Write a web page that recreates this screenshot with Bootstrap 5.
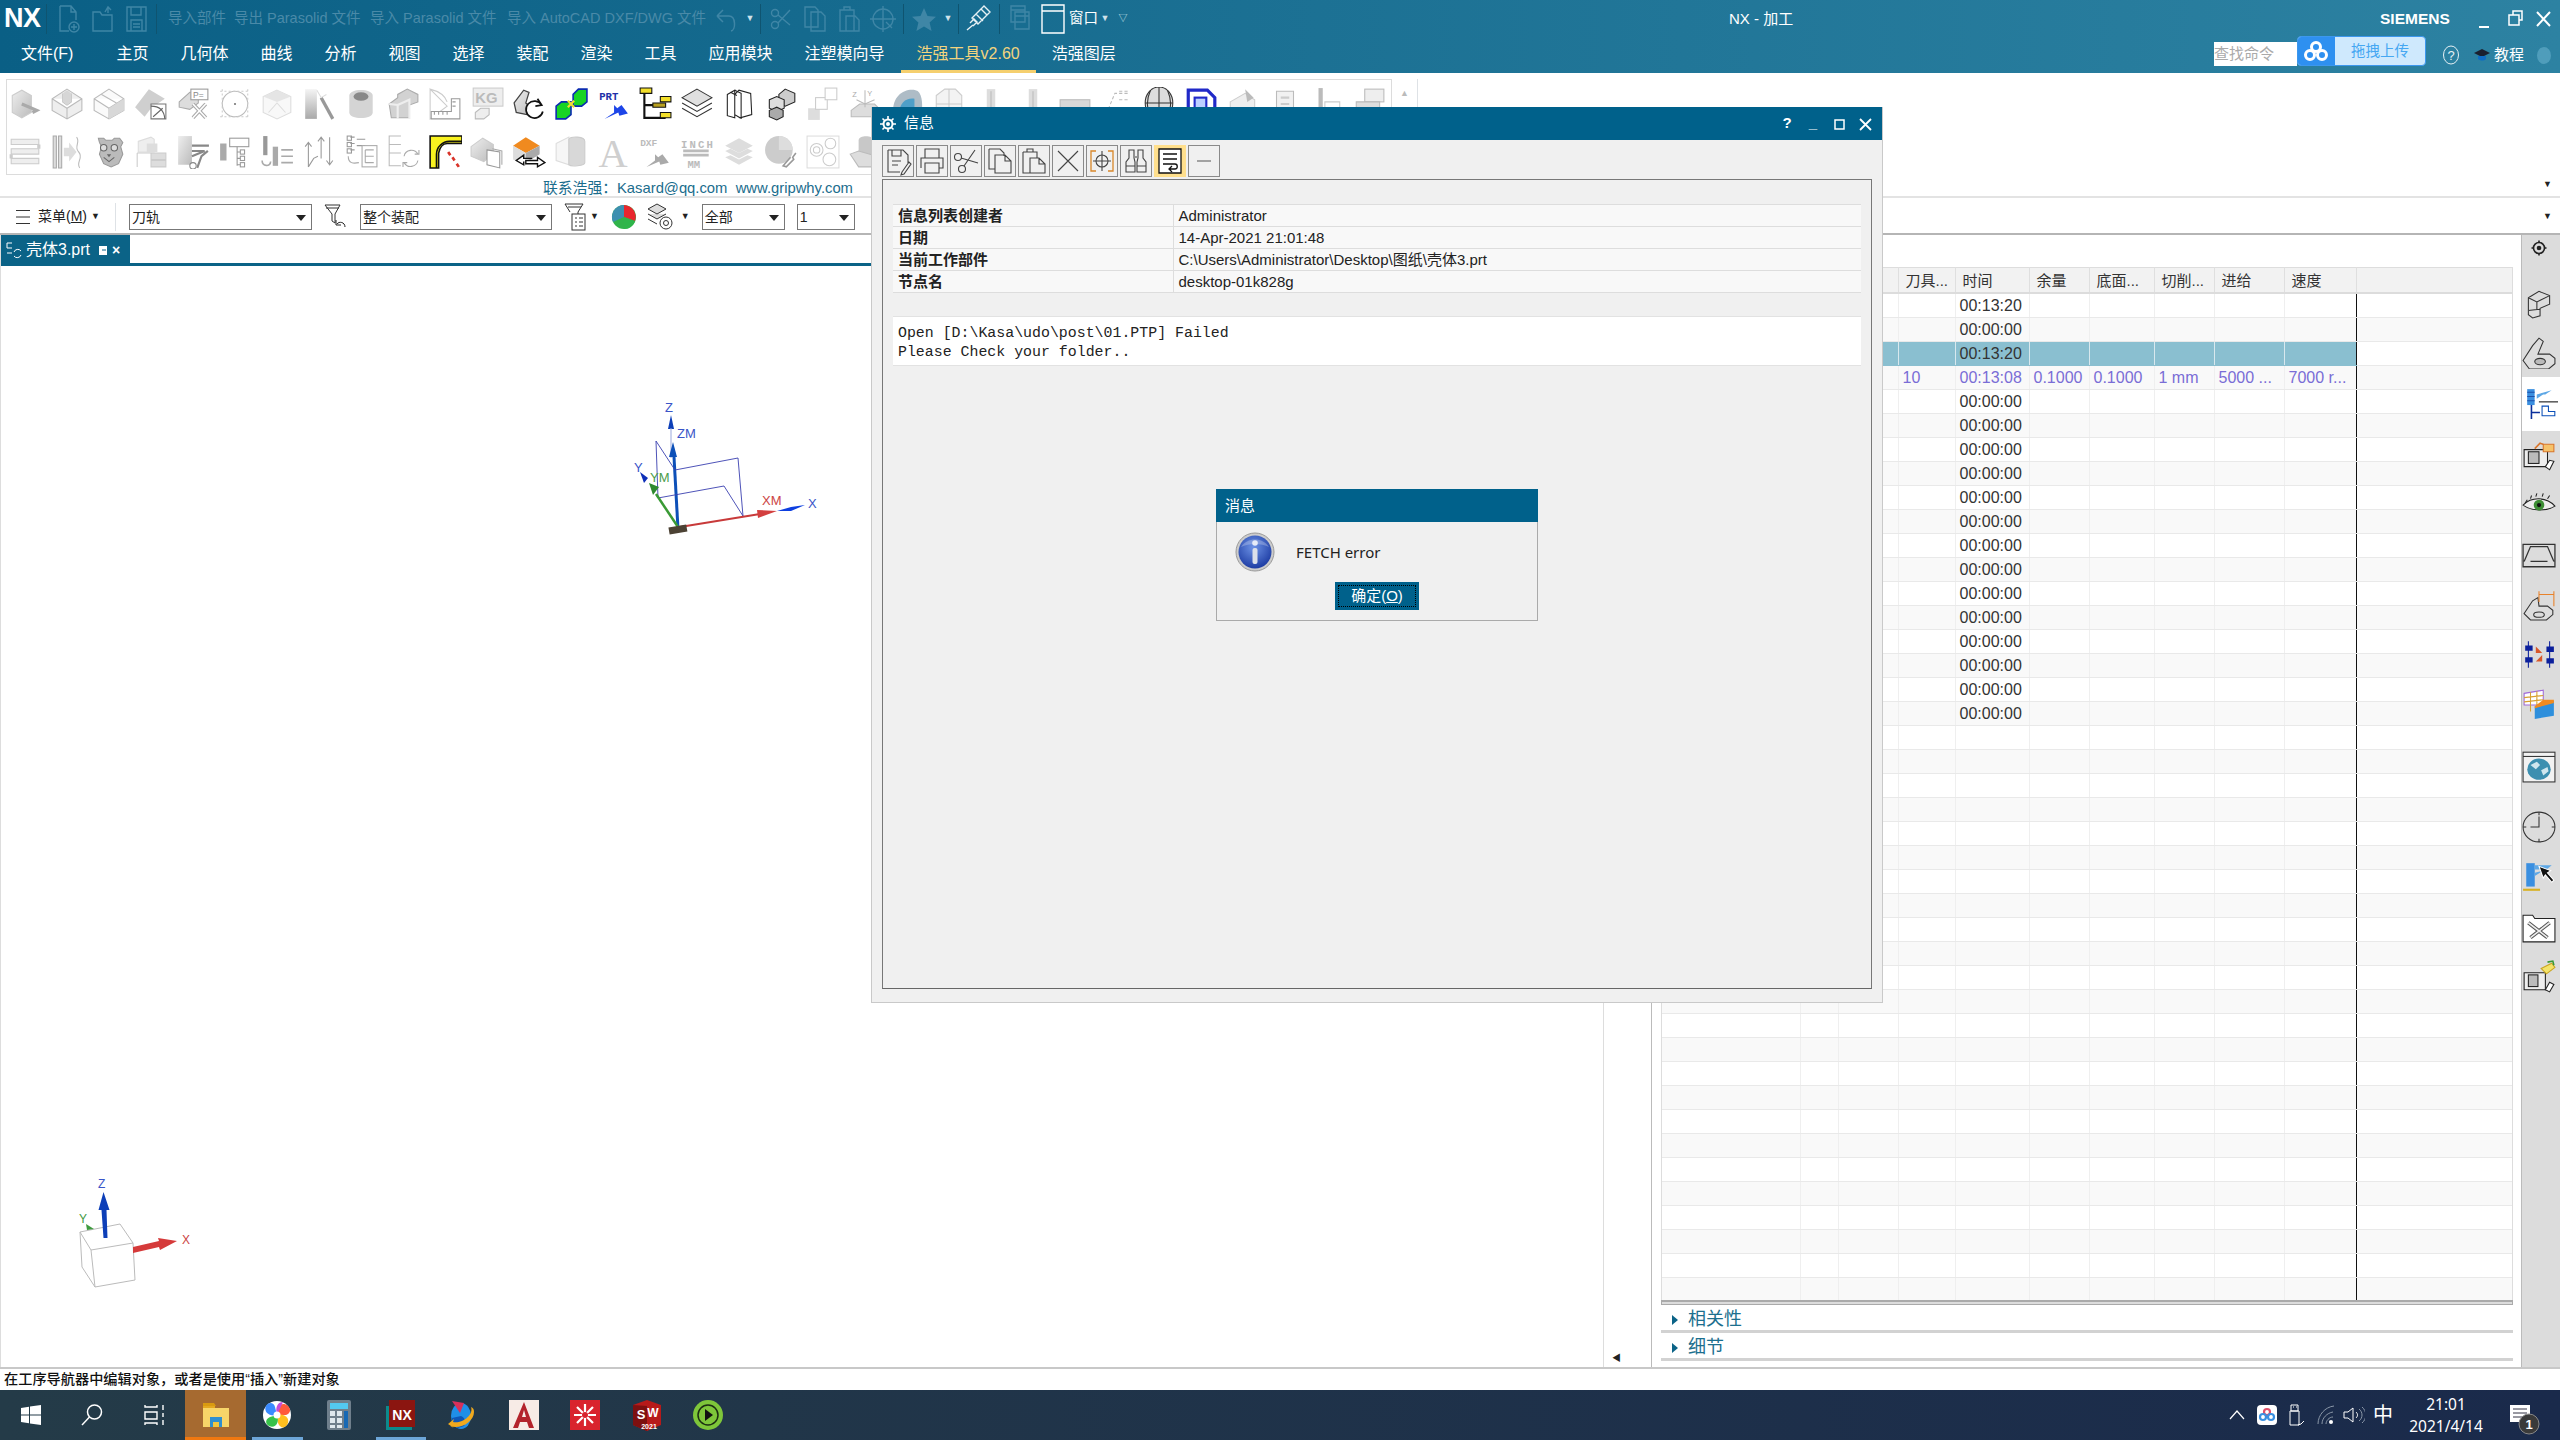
<!DOCTYPE html>
<html lang="zh-CN">

<head>
    <meta charset="UTF-8">
    <title>NX - 加工</title>
    <link href="https://cdn.jsdelivr.net/npm/bootstrap@5.3.3/dist/css/bootstrap.min.css" rel="stylesheet">
    <style>
        body {
            width: 2560px;
            height: 1440px;
            overflow: hidden;
            position: relative;
            background: #fff;
            font-family: "Liberation Sans", "Noto Sans CJK SC", sans-serif;
            font-size: 15px;
            color: #222;
        }

        .nx-head {
            height: 73px;
            background: linear-gradient(90deg, #0a5f85, #2d82a2);
            color: #fff;
        }

        .nx-qat {
            height: 37px;
        }

        .nx-logo {
            width: 46px;
            padding-left: 4px;
            font: bold 27px/37px "Liberation Sans", sans-serif;
            letter-spacing: -.5px;
        }

        .nx-sep {
            width: 1px;
            height: 30px;
            margin: 0 3px;
            background: #0f5470;
        }

        .nx-qi {
            width: 34px;
            height: 30px;
            flex: none;
        }

        .nx-qtx {
            flex: none;
            color: #4a8aa8;
            font-size: 14.5px;
            white-space: nowrap;
            margin-right: 10px;
        }

        .nx-caret {
            width: 14px;
            text-align: center;
            font-size: 9px;
            color: #cfe2ea;
            flex: none;
        }

        .nx-title {
            left: 1729px;
            top: 8px;
            font-size: 15px;
        }

        .nx-brand {
            font: bold 15.5px "Liberation Sans", sans-serif;
            width: 69px;
            margin-right: 25px;
        }

        .nx-tabs {
            height: 36px;
            padding-left: 5px;
        }

        .nx-tab {
            padding: 0 16px;
            line-height: 34px;
            font-size: 16px;
            white-space: nowrap;
        }

        .nx-tab-on {
            color: #f3d47e;
            border-bottom: 3px solid #f5cf6e;
        }

        .nx-search {
            width: 83px;
            height: 24px;
            background: #fff;
            color: #aaa;
            font-size: 15px;
            line-height: 24px;
            margin-top: 5px;
        }

        .nx-cloud {
            width: 129px;
            height: 30px;
            border: 1px solid #3c97ee;
            border-radius: 4px;
            background: #cfe9fd;
            color: #45a7f2;
            font-size: 14.5px;
            line-height: 28px;
            margin-top: -1px;
            margin-right: 17px;
            overflow: hidden;
        }

        .nx-cloud-ico {
            width: 37px;
            height: 100%;
            background: #2e90f0;
            margin-right: 16px;
        }

        .nx-help {
            height: 36px;
            margin-right: 9px;
        }

        .nx-ribbon {
            height: 125px;
            border-bottom: 2px solid #e3e3e3;
            padding: 6px 0 0 6px;
        }

        .nx-rbox {
            width: 1386px;
            height: 96px;
            border: 1px solid #dcdcdc;
            overflow: hidden;
        }

        .nx-rrow {
            height: 47px;
            margin-left: -3px;
        }

        #ribbonB {
            margin-top: 1px;
        }

        .nx-rcell {
            width: 42px;
            flex: none;
        }

        .nx-rcell svg {
            width: 34px;
            height: 34px;
        }

        .nx-rmore {
            color: #bbb;
            font-size: 9px;
        }

        .nx-contact {
            left: 543px;
            top: 104px;
            color: #1b6d8d;
            font-size: 14.8px;
            white-space: nowrap;
        }

        .nx-tools {
            height: 37px;
            border-bottom: 2px solid #b5b5b5;
            font-size: 14px;
            padding-top: 2px;
        }

        .nx-drop {
            height: 26px;
            border: 1px solid #777;
            background: #fff;
            line-height: 24px;
            padding-left: 2px;
            position: relative;
            flex: none;
        }

        .nx-drop::after {
            content: "";
            position: absolute;
            right: 5px;
            top: 10px;
            border: 5px solid transparent;
            border-top: 6px solid #222;
            border-bottom: 0;
        }

        .nx-filter {
            margin: 0 13px 0 11px;
            flex: none;
        }

        .nx-main {
            height: 1132px;
        }

        .nx-gfx {
            width: 1604px;
            border-right: 1px solid #ddd;
            border-left: 1px solid #ddd;
        }

        .nx-ftab {
            width: 129px;
            height: 28px;
            background: #0b6387;
            color: #fff;
            font-size: 16px;
            line-height: 28px;
            padding: 1px 0 0 5px;
            white-space: nowrap;
        }

        .nx-fline {
            height: 3px;
            background: #0b6387;
        }

        .nx-canvas {
            flex: 1;
            position: relative;
        }

        .nx-triad {
            position: absolute;
        }

        .nx-gut {
            width: 48px;
            border-right: 1px solid #bbb;
        }

        .nx-panel {
            width: 869px;
            padding: 32px 8px 0 9px;
        }

        .nx-gridwrap {
            height: 1033px;
            overflow: hidden;
            border-left: 1px solid #ddd;
            border-right: 1px solid #ddd;
        }

        .nx-grid {
            table-layout: fixed;
            width: 851px;
            margin: 0;
            font-size: 16px;
        }

        .nx-grid th,
        .nx-grid td {
            height: 24px;
            padding: 0 4px;
            line-height: 23px;
            border: 0;
            border-right: 1px solid #efefef;
            border-bottom: 1px solid #e9e9e9;
            white-space: nowrap;
            overflow: hidden;
            box-shadow: none;
            background: transparent;
            color: #333;
        }

        .nx-grid th {
            height: 25px;
            font-weight: 400;
            font-size: 15px;
            padding-left: 7px;
            background: #f2f2f2;
            border-top: 1px solid #ddd;
            border-bottom: 2px solid #dcdcdc;
            border-right: 1px solid #dfdfdf;
        }

        .nx-grid tr:nth-child(even) td {
            background: #f9f9f9;
        }

        .nx-grid td.nx-last {
            border-right: 1px solid #111;
        }

        .nx-grid tr.nx-sel td:not(.nx-end) {
            background: #8abfd0;
            border-right-color: #d8e8ee;
            border-bottom-color: #8abfd0;
        }

        .nx-grid tr.nx-sel td.nx-last {
            border-right-color: #111;
        }

        .nx-grid tr.nx-op td {
            color: #7a6dd6;
        }

        .nx-hbar {
            height: 5px;
            background: #dcdcdc;
            border: 1px solid #aaa;
            border-top-width: 2px;
        }

        .nx-sec {
            height: 28px;
            border-bottom: 3px solid #d2d2d2;
            color: #1c6f8e;
            font-size: 18px;
            line-height: 28px;
            padding-left: 11px;
        }

        .nx-tri {
            display: inline-block;
            border: 5px solid transparent;
            border-left: 6px solid #0b6387;
            border-right: 0;
            margin-right: 10px;
        }

        .nx-side {
            width: 39px;
            background: #dcdcdc;
            border-left: 1px solid #bbb;
        }

        .nx-si {
            width: 36px;
            height: 50px;
            flex: none;
        }

        .nx-si svg {
            width: 34px;
            height: 34px;
        }

        .nx-si-on {
            background: #fff;
            height: 54px;
            width: 38px;
            align-self: flex-start;
        }

        .nx-status {
            height: 23px;
            border-top: 2px solid #c8c8c8;
            font-size: 14.2px;
            line-height: 21px;
            padding-left: 4px;
            color: #111;
            font-weight: 500;
        }

        .nx-bar {
            height: 50px;
            background: linear-gradient(90deg, #243b48, #1a2a4b);
        }

        .nx-bi {
            width: 61.6px;
            height: 50px;
            flex: none;
            position: relative;
        }

        .nx-bi-file {
            background: #a66a30;
            border-bottom: 3px solid #f07810;
        }

        .nx-bi-run::after {
            content: "";
            position: absolute;
            left: 6px;
            right: 5px;
            bottom: 0;
            height: 3px;
            background: #6da6d8;
        }

        .nx-tray {
            color: #fff;
            margin-right: 17px;
        }

        .nx-tgap {
            margin-left: 12px;
        }

        .nx-clock {
            width: 90px;
            font-size: 15.5px;
            line-height: 22px;
            text-align: center;
            font-family: "Noto Sans", sans-serif;
        }

        .nx-win {
            position: absolute;
            left: 871px;
            top: 107px;
            width: 1012px;
            height: 896px;
            background: #f0f0f0;
            border: 1px solid #c9c9c9;
            border-top: 0;
        }

        .nx-wbar {
            height: 33px;
            background: #00618b;
            color: #fff;
            padding-left: 8px;
        }

        .nx-wctl {
            font-size: 15px;
            font-weight: 700;
            width: 26px;
            text-align: center;
        }

        .nx-wtools {
            height: 39px;
            padding: 5px 0 0 10px;
            gap: 2px;
        }

        .nx-wbtn {
            width: 32px;
            height: 32px;
            border: 1px solid #8a8a8a;
        }

        .nx-wbtn-on {
            background: #ffdf8c;
            border-color: #ffdf8c;
        }

        .nx-wbody {
            height: 810px;
            margin: 0 10px;
            border: 1px solid #777;
            border-bottom-color: #666;
            padding: 24px 10px 0;
        }

        .nx-info {
            table-layout: fixed;
            margin: 0;
            font-size: 15px;
            border-top: 1px solid #ddd;
        }

        .nx-info td {
            height: 22px;
            padding: 0 5px;
            line-height: 21px;
            border: 0;
            border-bottom: 1px solid #ddd;
            background: #f8f8f8;
            box-shadow: none;
            color: #222;
            white-space: nowrap;
        }

        .nx-info td:first-child {
            width: 280px;
            font-weight: 700;
            border-right: 1px solid #ddd;
        }

        .nx-log {
            margin-top: 23px;
            height: 50px;
            background: #fff;
            border-top: 1px solid #e2e2e2;
            border-bottom: 1px solid #e2e2e2;
            padding: 7px 5px;
            font: 14.9px/19px "Liberation Mono", monospace;
            color: #222;
        }

        .nx-msg {
            position: absolute;
            left: 344px;
            top: 382px;
            width: 322px;
            height: 132px;
            background: #f0f0f0;
            border: 1px solid #aaa;
            border-top: 0;
        }

        .nx-mbar {
            height: 33px;
            margin: 0 -1px;
            background: #00618b;
            color: #fff;
            font-size: 15px;
            line-height: 33px;
            padding-left: 9px;
        }

        .nx-mbody {
            height: 60px;
            padding-left: 18px;
        }

        .nx-mbtn {
            width: 84px;
            height: 28px;
            margin: 0 auto;
            display: block;
            background: #00618b;
            color: #fff;
            font-size: 15px;
            line-height: 20px;
            border: 0;
            padding: 3px;
        }

        .nx-mbtn span {
            display: block;
            border: 1px dotted #000;
            height: 22px;
        }
    </style>
</head>

<body>
    <svg width="0" height="0" class="position-absolute">
        <defs>
            <linearGradient id="gGrey" x1="0" y1="0" x2="1" y2="1">
                <stop offset="0" stop-color="#eee" />
                <stop offset="1" stop-color="#bbb" />
            </linearGradient>
            <radialGradient id="gInfo" cx=".45" cy=".35" r=".75">
                <stop offset="0" stop-color="#6d93e6" />
                <stop offset="1" stop-color="#12309a" />
            </radialGradient>
            <linearGradient id="gMetal" x1="0" y1="0" x2="0" y2="1">
                <stop offset="0" stop-color="#f4f4f4" />
                <stop offset="1" stop-color="#a9a9a9" />
            </linearGradient>
        </defs>
    </svg>

    <header class="nx-head">
        <div class="nx-qat d-flex align-items-center position-relative">
            <div class="nx-logo">NX</div>
            <div class="nx-sep ms-0 me-0"></div>
            <svg class="nx-qi ms-1" viewBox="0 0 34 30" fill="none" stroke="#3f86a6" stroke-width="1.4"><path d="M9 2h11l5 6v8M9 2v25h9M20 2v6h5"/><circle cx="23" cy="23" r="5"/><path d="M23 20v6M20 23h6"/></svg>
            <svg class="nx-qi" viewBox="0 0 34 30" fill="none" stroke="#3f86a6" stroke-width="1.4"><path d="M8 8h7l2 3h10v16H8zM20 8l3-5 3 3M23 3v6"/></svg>
            <svg class="nx-qi" viewBox="0 0 34 30" fill="none" stroke="#3f86a6" stroke-width="1.4"><path d="M8 3h19v24H8zM12 3v8h10V3M12 16h11v11H12zM14 20h7M14 23h7"/></svg>
            <div class="nx-sep"></div>
            <span class="nx-qtx ms-2" style="width:56px">导入部件</span>
            <span class="nx-qtx" style="width:126px">导出 Parasolid 文件</span>
            <span class="nx-qtx" style="width:127px">导入 Parasolid 文件</span>
            <span class="nx-qtx me-1" style="width:198px">导入 AutoCAD DXF/DWG 文件</span>
            <svg class="nx-qi" viewBox="0 0 34 30" fill="none" stroke="#3f86a6" stroke-width="1.5"><path d="M8 12h12c7 0 7 14 2 15M8 12l6-6M8 12l6 6"/></svg>
            <div class="nx-caret">▼</div>
            <div class="nx-sep"></div>
            <svg class="nx-qi" viewBox="0 0 34 30" fill="none" stroke="#3f86a6" stroke-width="1.4"><circle cx="11" cy="9" r="3.5"/><circle cx="11" cy="21" r="3.5"/><path d="M14 11l12 10M14 19L26 6"/></svg>
            <svg class="nx-qi" viewBox="0 0 34 30" fill="none" stroke="#3f86a6" stroke-width="1.4"><path d="M7 3h10l3 3v17H7zM13 8h10l4 4v15H13z"/></svg>
            <svg class="nx-qi" viewBox="0 0 34 30" fill="none" stroke="#3f86a6" stroke-width="1.4"><path d="M8 6h14v21H8zM12 6V3h6v3M14 12h9l4 4v11H14z"/></svg>
            <svg class="nx-qi" viewBox="0 0 34 30" fill="none" stroke="#3f86a6" stroke-width="1.4"><circle cx="17" cy="15" r="10"/><path d="M17 2v26M4 15h26M20 18l6 6"/></svg>
            <div class="nx-sep"></div>
            <svg class="nx-qi" viewBox="0 0 34 30" fill="#3f86a6"><path d="M17 4l3.500 8 8.500.8-6.400 5.700 2 8.500-7.600-4.500L9.400 27l2-8.500L5 12.800l8.500-.8z"/></svg>
            <div class="nx-caret">▼</div>
            <div class="nx-sep"></div>
            <svg class="nx-qi" viewBox="0 0 34 30" fill="none" stroke="#e6f0f4" stroke-width="1.4"><path d="M10 14l9-9 6 6-9 9zM14 10l7 7M11 22l4-4-3-3-4 4M5 26l6-5M19 5l3-3 6 6-3 3"/></svg>
            <div class="nx-sep"></div>
            <svg class="nx-qi" viewBox="0 0 34 30" fill="none" stroke="#3f86a6" stroke-width="1.400"><path d="M8 2h14v16H8zM12 8h14v17H12zM8 6h14M12 12h14"/></svg>
            <svg class="nx-qi ms-1" style="width:24px" viewBox="0 0 24 30" fill="none" stroke="#fff" stroke-width="1.4"><path d="M1 1h22v28H1zM1 7h22"/></svg>
            <span class="ms-1" style="font-size:14.5px">窗口</span>
            <div class="nx-caret">▼</div>
            <div class="nx-caret ms-1">▽</div>
            <div class="nx-title position-absolute">NX - 加工</div>
            <div class="ms-auto d-flex align-items-center">
                <div class="nx-brand">SIEMENS</div>
                <svg width="86" height="24" viewBox="0 0 86 24" fill="none" stroke="#fff" stroke-width="1.5"><path d="M5 20h10" stroke-width="2"/><path d="M35 8h10v10H35zM39 8V4h9v9h-3"/><path d="M63 5l13 14M76 5L63 19" stroke-width="2"/></svg>
            </div>
        </div>
        <div class="nx-tabs d-flex">
            <div class="nx-tab" style="margin-right:11px">文件(F)</div>
            <div class="nx-tab">主页</div>
            <div class="nx-tab">几何体</div>
            <div class="nx-tab">曲线</div>
            <div class="nx-tab">分析</div>
            <div class="nx-tab">视图</div>
            <div class="nx-tab">选择</div>
            <div class="nx-tab">装配</div>
            <div class="nx-tab">渲染</div>
            <div class="nx-tab">工具</div>
            <div class="nx-tab">应用模块</div>
            <div class="nx-tab">注塑模向导</div>
            <div class="nx-tab nx-tab-on">浩强工具v2.60</div>
            <div class="nx-tab">浩强图层</div>
            <div class="ms-auto d-flex">
                <div class="nx-search">查找命令</div>
                <div class="nx-cloud d-flex">
                    <div class="nx-cloud-ico d-flex align-items-center justify-content-center">
                        <svg width="26" height="22" viewBox="0 0 26 22" fill="none" stroke="#fff" stroke-width="3"><circle cx="13" cy="7" r="4.500"/><circle cx="7" cy="15" r="4.500"/><circle cx="19" cy="15" r="4.500"/></svg>
                    </div>
                    拖拽上传
                </div>
                <div class="nx-help d-flex align-items-center">
                    <svg width="16" height="20" viewBox="0 0 16 20" fill="none" stroke="#e6f0f4"><ellipse cx="8" cy="10" rx="7.500" ry="9"/><text x="8" y="15" font-size="13" text-anchor="middle" fill="#e6f0f4" stroke="none">?</text></svg>
                    <svg style="margin-left:15px" width="16" height="14" viewBox="0 0 16 14"><path d="M0 5l8-4 8 4-8 4z" fill="#1a2030"/><path d="M4 8v3c3 2 6 2 8 0V8" fill="#0e6cc4"/></svg>
                    <span class="ms-1">教程</span>
                    <span style="margin-left:13px;width:14px;height:17px;background:#4f9dbb;border-radius:50%"></span>
                </div>
            </div>
        </div>
    </header>

    <section class="nx-ribbon d-flex position-relative">
        <div class="nx-rbox">
            <div class="nx-rrow d-flex" id="ribbonA"></div>
            <div class="nx-rrow d-flex" id="ribbonB"></div>
        </div>
        <div class="nx-rmore ms-2 mt-2">▲</div>
        <div class="ms-2 border-start" style="height:76px"></div>
        <div class="position-absolute d-flex w-100 justify-content-end" style="top:105px;font-size:9px;padding-right:8px;color:#222;right:0">▼</div>
        <div class="nx-contact position-absolute">联系浩强：Kasard@qq.com&nbsp; www.gripwhy.com</div>
    </section>

    <section class="nx-tools d-flex align-items-center position-relative">
        <svg class="ms-3" width="14" height="16" viewBox="0 0 14 16" stroke="#333"><path d="M0 1.500h14M0 8h14M0 14.500h14"/></svg>
        <span class="ms-2">菜单(<u>M</u>)</span>
        <span class="ms-1" style="font-size:9px">▼</span>
        <div class="border-start" style="height:28px;margin:0 13px 0 15px"></div>
        <div class="nx-drop" style="width:183px">刀轨</div>
        <svg class="nx-filter" width="24" height="28" viewBox="0 0 24 28" fill="none" stroke="#333"><path d="M2 2h15l-5 9v9l-3-2v-7zM3 5h13"/><path d="M22 24c0-5-6-6-8-3M13 17v5h5" stroke="#222"/></svg>
        <div class="nx-drop" style="width:192px">整个装配</div>
        <svg style="margin-left:12px" width="26" height="30" viewBox="0 0 26 30" fill="none" stroke="#333"><path d="M1 2h18l-5 8v6M6 10L1 2M4 5h13"/><rect x="8" y="12" width="13" height="16" fill="#fff"/><path d="M11 16h2M15 16h4M11 20h2M15 20h4M11 24h2M15 24h4"/></svg>
        <span style="font-size:9px">▼</span>
        <svg style="margin-left:12px" width="26" height="26" viewBox="0 0 26 26"><circle cx="13" cy="13" r="12" fill="#31b34a"/><path d="M13 13V1a12 12 0 0 1 11 16z" fill="#e8262d"/><path d="M13 13L24 17A12 12 0 0 1 13 25z" fill="#2fb54a"/><path d="M13 13V1A12 12 0 0 0 2 18z" fill="#3d8fb0"/></svg>
        <svg class="ms-2" width="32" height="30" viewBox="0 0 32 30" fill="#ddd" stroke="#333"><path d="M3 7l9-5 9 5-9 5zM3 12l9 5 9-5M3 17l9 5"/><circle cx="21" cy="21" r="6" fill="#fff"/><circle cx="21" cy="21" r="2.500" fill="#fff"/></svg>
        <span class="ms-1" style="font-size:9px;margin-right:12px">▼</span>
        <div class="nx-drop" style="width:83px">全部</div>
        <div class="nx-drop" style="width:58px;margin-left:12px">1</div>
        <div class="position-absolute" style="right:8px;top:12px;font-size:9px;color:#222">▼</div>
    </section>

    <main class="nx-main d-flex">
        <div class="nx-gfx d-flex flex-column">
            <div class="nx-ftab d-flex align-items-center">
                <svg width="16" height="18" viewBox="0 0 16 18" fill="none" stroke="#fff"><path d="M6 2H1v5h5M1 12h5"/><path d="M8 11a4 4 0 0 1 7-1M15 14a4 4 0 0 1-7 1"/></svg>
                <span class="ms-1">壳体3.prt</span>
                <svg class="ms-2" width="10" height="12" viewBox="0 0 10 12"><path d="M1 2h8v9H1z" fill="#fff"/><path d="M4 6h4" stroke="#0b6387"/></svg>
                <span class="ms-1" style="font-size:14px;font-weight:700">×</span>
            </div>
            <div class="nx-fline"></div>
            <div class="nx-canvas">
                <svg class="nx-triad" style="left:599px;top:114px" width="260" height="170" viewBox="0 0 260 170" font-family="Liberation Sans" font-size="13">
                    <path d="M71 35l-3 14h6z" fill="#0d3fb8"/>
                    <path d="M71 48v30" stroke="#9aa8dd"/>
                    <path d="M73 62l-4 15h8z" fill="#0d50b8"/>
                    <path d="M74 77l4 72" stroke="#0d50b8" stroke-width="3"/>
                    <path d="M56 61l19 29 63-12 5 58M56 61l2 57 66-12 19 30" fill="none" stroke="#3a3fb0" stroke-width=".9"/>
                    <path d="M78 147L56 114" stroke="#3a9a35" stroke-width="2.500"/>
                    <path d="M49 103l10 4-6 8z" fill="#2f8a2f"/>
                    <path d="M40 92l8 6-4 5z" fill="#0d2fb8"/>
                    <path d="M80 147l80-13" stroke="#c83a3a" stroke-width="2"/>
                    <path d="M157 130l20 1-19 7z" fill="#d33f3f"/>
                    <path d="M177 131l14-4 14-2-14 6z" fill="#0d3fe0"/>
                    <rect x="69" y="146" width="18" height="7" fill="#4c4234" transform="rotate(-10 78 150)"/>
                    <text x="65" y="32" fill="#3a55c8">Z</text>
                    <text x="77" y="58" fill="#3a55c8">ZM</text>
                    <text x="34" y="92" fill="#3a55c8">Y</text>
                    <text x="50" y="102" fill="#4a9c4a">YM</text>
                    <text x="162" y="125" fill="#cc4444">XM</text>
                    <text x="208" y="128" fill="#3a55c8">X</text>
                </svg>
                <svg class="nx-triad" style="left:59px;top:904px" width="140" height="130" viewBox="60 1170 140 130" font-family="Liberation Sans" font-size="12">
                    <path d="M80 1232l40-8 13 19-42 7zM80 1232l2 35 13 20 40-7-2-37M91 1250l4 37" fill="#fff" stroke="#bbb"/>
                    <path d="M103.500 1192l-5 18h3l2 28h4l-1-28h3z" fill="#0d3fb8"/>
                    <path d="M86 1224l8 5-7 1z" fill="#3f9a3f"/>
                    <path d="M133 1247l26-6-1-3 19 3-17 9-1-3-26 6z" fill="#d53a3a"/>
                    <text x="98" y="1188" fill="#3a55c8">Z</text>
                    <text x="79" y="1223" fill="#3f9a3f">Y</text>
                    <text x="182" y="1244" fill="#cc4444">X</text>
                </svg>
            </div>
        </div>
        <div class="nx-gut d-flex align-items-end">
            <span class="ms-2" style="font-size:9px;margin-bottom:2px">◀</span>
        </div>
        <div class="nx-panel">
            <div class="nx-gridwrap">
                <table class="table nx-grid">
                    <colgroup>
                        <col style="width:138px"><col style="width:38px"><col style="width:60px"><col style="width:57px"><col style="width:74px"><col style="width:60px"><col style="width:65px"><col style="width:60px"><col style="width:70px"><col style="width:72px"><col>
                    </colgroup>
                    <thead>
                        <tr><th></th><th></th><th></th><th>刀具...</th><th>时间</th><th>余量</th><th>底面...</th><th>切削...</th><th>进给</th><th>速度</th><th></th></tr>
                    </thead>
                    <tbody id="opRows"></tbody>
                </table>
            </div>
            <div class="nx-hbar"></div>
            <div class="nx-sec"><i class="nx-tri"></i>相关性</div>
            <div class="nx-sec"><i class="nx-tri"></i>细节</div>
        </div>
        <aside class="nx-side d-flex flex-column align-items-center pe-1" id="sideBar">
            <div class="nx-si d-flex justify-content-center align-items-center" style="height:26px">
                <svg style="width:16px;height:16px" viewBox="0 0 16 16" fill="none" stroke="#222" stroke-width="1.600"><circle cx="8" cy="8" r="5.500"/><circle cx="8" cy="8" r="1.500" fill="#222"/><path d="M8 .5v2M8 13.500v2M.5 8h2M13.500 8h2"/></svg>
            </div>
            <div class="nx-si d-flex justify-content-center align-items-center mt-3">
                <svg viewBox="0 0 32 32" stroke="#333" fill="#ddd"><path d="M6 12l10-6 10 4v8l-9 4v7l-7 2-4-3z"/><path d="M6 12l8 4 12-6M14 16v7l-8 1M14 23l3 0"/></svg>
            </div>
            <div class="nx-si d-flex justify-content-center align-items-center">
                <svg viewBox="0 0 32 32" stroke="#333" fill="#ddd"><path d="M1 24l9-14 6-7 4 3-5 12h11l5 4v5l-6 5H7z"/><ellipse cx="17" cy="25" rx="5" ry="3" fill="#bbb"/></svg>
            </div>
            <div class="nx-si nx-si-on d-flex justify-content-center align-items-center">
                <svg viewBox="0 0 32 32" fill="none"><rect x="3" y="2" width="7" height="15" fill="#3a8fe0"/><path d="M3 5h7M3 9h7M3 13h7" stroke="#1e50a8"/><path d="M7 17v13M7 24h8" stroke="#0b2f9c" stroke-width="1.500"/><path d="M12 7l14-4-6 4 12 0H18l-6 4z" fill="#5ea8e6"/><path d="M14 14h18" stroke="#111"/><path d="M17 18h6v5h6v4H17z" stroke="#0b4fb8"/></svg>
            </div>
            <div class="nx-si d-flex justify-content-center align-items-center">
                <svg viewBox="0 0 32 32" stroke="#222" fill="#eee"><path d="M2 10h22v16H2z"/><rect x="6" y="12" width="10" height="11" fill="#bbb"/><path d="M22 26l4-6 4 1-4 8z" fill="#fff"/><path d="M20 5h10v7H20z" fill="#f5c26a" stroke="#d9752a"/><path d="M12 9l5-5 3 1" fill="none" stroke="#d9752a" stroke-width="1.500"/></svg>
            </div>
            <div class="nx-si d-flex justify-content-center align-items-center" style="margin-top:-2px">
                <svg viewBox="0 0 32 32" fill="none"><path d="M1 17c8-8 22-8 30 1-8 5-22 5-30-1z" fill="#eee" stroke="#222"/><circle cx="16" cy="17" r="5" fill="#3d8f35"/><circle cx="16" cy="17" r="2" fill="#111"/><path d="M3 15l2-3M8 11l1-3M13 9l1-3M19 9l1-3M24 11l2-3" stroke="#222"/></svg>
            </div>
            <div class="nx-si d-flex justify-content-center align-items-center">
                <svg viewBox="0 0 32 32" fill="none" stroke="#333" stroke-width="1.200"><path d="M1 7h30v21H1zM2 23l6-14h16l6 14M8 23h16"/></svg>
            </div>
            <div class="nx-si d-flex justify-content-center align-items-center">
                <svg viewBox="0 0 32 32" stroke="#333" fill="#ddd"><path d="M2 25l8-12 5-3 1 8h8l5 4v4l-6 5H8z"/><ellipse cx="16" cy="26" rx="5" ry="2.500"/><path d="M16 4v10M30 4v14M16 7h14" stroke="#e8822a" fill="none"/></svg>
            </div>
            <div class="nx-si d-flex justify-content-center align-items-center">
                <svg viewBox="0 0 32 32"><path d="M6 4v25M26 4v25" stroke="#0b1f9c"/><path d="M3 8h7v5H3zM3 19h7v5H3zM23 9h7v5h-7zM23 20h7v5h-7z" fill="#0b1f9c"/><path d="M13 9l6 6-6 0zM19 17l-6 6 6 0z" fill="#d9582a"/></svg>
            </div>
            <div class="nx-si d-flex justify-content-center align-items-center">
                <svg viewBox="0 0 32 32"><path d="M2 6l18-3v14H2z" fill="#fff" stroke="#a06ad8"/><path d="M2 10l18-2M2 14l18-2M8 5v18M14 4v18" stroke="#d8a030"/><path d="M12 18l18-5v14l-18 3z" fill="#2e8fdc"/><path d="M12 18l8-6h10v3l-18 5z" fill="#f08a1f"/></svg>
            </div>
            <div class="nx-si d-flex justify-content-center align-items-center" style="margin-top:12px">
                <svg viewBox="0 0 32 32"><rect x="1" y="3" width="30" height="28" fill="#f2f2f2" stroke="#333"/><path d="M1 7h30" stroke="#333"/><ellipse cx="16" cy="19" rx="11" ry="10" fill="#3d8fb0"/><path d="M8 15l6-3 3 3-4 4zM18 20l6-3 1 4-5 4z" fill="#cfe6ee"/></svg>
            </div>
            <div class="nx-si d-flex justify-content-center align-items-center" style="margin-top:11px">
                <svg viewBox="0 0 32 32" fill="none" stroke="#333"><ellipse cx="16" cy="16" rx="15" ry="14"/><path d="M16 6v10H8M16 2v3M16 27v3M1 16h3M28 16h3"/></svg>
            </div>
            <div class="nx-si d-flex justify-content-center align-items-center">
                <svg viewBox="0 0 32 32"><rect x="4" y="3" width="8" height="22" fill="#3a8fe0"/><path d="M12 5l16 0-5 4H12zM12 12l8-2-8 5z" fill="#5ea8e6"/><path d="M1 28h16" stroke="#d8b020" stroke-width="2"/><path d="M16 6l4 11 2-3 6 7 2-2-6-7 3-2z" fill="#111" stroke="#fff"/></svg>
            </div>
            <div class="nx-si d-flex justify-content-center align-items-center">
                <svg viewBox="0 0 32 32"><path d="M1 5h9l2 3h19v22H1z" fill="#fff" stroke="#222"/><path d="M6 12l18 14M26 12L8 26" stroke="#555" stroke-width="3.500"/><path d="M6 12l18 14M26 12L8 26" stroke="#eee" stroke-width="1.500"/></svg>
            </div>
            <div class="nx-si d-flex justify-content-center align-items-center">
                <svg viewBox="0 0 32 32" stroke="#222" fill="#eee"><path d="M2 12h20v16H2z"/><rect x="6" y="14" width="9" height="11" fill="#bbb"/><path d="M22 28l4-7 4 2-4 7z" fill="#fff"/><path d="M18 8l10-5 3 4-8 6z" fill="#f3e36a" stroke="#caa520"/><path d="M24 2l5-1 1 4" stroke="#3a9a35" fill="none" stroke-width="1.500"/></svg>
            </div>
        </aside>
    </main>

    <div class="nx-status">在工序导航器中编辑对象，或者是使用“插入”新建对象</div>

    <footer class="nx-bar d-flex align-items-center">
        <div class="nx-bi d-flex align-items-center justify-content-center">
            <svg width="20" height="20" viewBox="0 0 20 20" fill="#fff"><path d="M0 3l8-1.200V9.500H0zM9 1.600L20 0v9.500H9zM0 10.500h8v7.700L0 17zM9 10.500h11V20L9 18.400z"/></svg>
        </div>
        <div class="nx-bi d-flex align-items-center justify-content-center">
            <svg width="22" height="22" viewBox="0 0 22 22" fill="none" stroke="#fff" stroke-width="1.500"><circle cx="13.500" cy="8" r="7"/><path d="M8.500 13L1 21"/></svg>
        </div>
        <div class="nx-bi d-flex align-items-center justify-content-center">
            <svg width="22" height="22" viewBox="0 0 22 22" fill="none" stroke="#fff" stroke-width="1.400"><path d="M2 1v2h12V1M2 8h12v7H2zM2 21v-2h12v2M20 1v5M20 9v4M20 16v5"/></svg>
        </div>
        <div class="nx-bi nx-bi-file d-flex align-items-center justify-content-center">
            <svg width="28" height="28" viewBox="0 0 28 28"><path d="M1 6h12v6H1z" fill="#e4a820"/><path d="M1 3h11l2 3H1z" fill="#d99a10"/><path d="M1 8h26v19H1z" fill="#f7d569"/><path d="M8 17h12v10h-3v-5h-6v5H8z" fill="#2f8fcf"/><path d="M11 22h6v5h-6z" fill="#f2c640"/></svg>
        </div>
        <div class="nx-bi nx-bi-run d-flex align-items-center justify-content-center">
            <svg width="30" height="30" viewBox="0 0 30 30"><circle cx="15" cy="15" r="14" fill="#fff"/><path d="M15 15C15 6 20 1 26 6c3 3 3 7-2 9z" fill="#ff5a3c"/><path d="M15 15c8-2 14 4 10 10-3 4-7 3-9-2z" fill="#ffbf1f"/><path d="M15 15c3 8-2 14-8 11-4-2-4-7 1-9z" fill="#37c24a"/><path d="M15 15C8 17 1 12 4 6c2-4 8-4 9 1z" fill="#3a8bff"/><path d="M15 15C13 8 15 2 21 2z" fill="#c64dd8"/><circle cx="15" cy="15" r="3.500" fill="#fff"/></svg>
        </div>
        <div class="nx-bi d-flex align-items-center justify-content-center">
            <svg width="24" height="30" viewBox="0 0 24 30"><rect width="24" height="30" rx="2" fill="#6f7f8c"/><rect x="3" y="3" width="18" height="6" fill="#53c8f0"/><path d="M3 11h5v5H3zM10 11h5v5h-5zM3 18h5v5H3zM10 18h5v5h-5zM3 25h5v3H3zM10 25h5v3h-5z" fill="#dfe8ee"/><rect x="17" y="11" width="4" height="17" fill="#1769b5"/></svg>
        </div>
        <div class="nx-bi nx-bi-run d-flex align-items-center justify-content-center">
            <svg width="30" height="30" viewBox="0 0 30 30"><path d="M1 6h26v24H1z" fill="#0c8a8c"/><rect x="4" width="26" height="27" fill="#8b1510"/><text x="17" y="20" text-anchor="middle" font-size="14" font-weight="700" fill="#fff" font-family="Liberation Sans">NX</text></svg>
        </div>
        <div class="nx-bi d-flex align-items-center justify-content-center">
            <svg width="30" height="30" viewBox="0 0 30 30"><ellipse cx="14" cy="16" rx="10" ry="13" fill="#1f8fe8"/><path d="M5 1l12 2-4 10z" fill="#d8305a"/><path d="M14 16c4 2 6 6 3 10l-6 2c-4-2-6-6-6-10z" fill="#0e57b8"/><path d="M3 26c10 4 24-4 24-14 0-3-1-4-3-5 3 8-9 17-18 15l1-3-6 5 6 4z" fill="#f0a91e"/></svg>
        </div>
        <div class="nx-bi d-flex align-items-center justify-content-center">
            <svg width="30" height="30" viewBox="0 0 30 30"><rect width="30" height="30" fill="#f7ebe6"/><path d="M15 2l10 26h-5l-2-6h-7l-2 6H4zM13 17h4l-2-7z" fill="#b3232c"/></svg>
        </div>
        <div class="nx-bi d-flex align-items-center justify-content-center">
            <svg width="30" height="30" viewBox="0 0 30 30"><rect width="30" height="30" fill="#d9232e"/><g stroke="#fff" stroke-width="2.200"><path d="M15 4v22M4 15h22M7 7l16 16M23 7L7 23"/></g><circle cx="15" cy="15" r="3" fill="#d9232e"/></svg>
        </div>
        <div class="nx-bi d-flex align-items-center justify-content-center">
            <svg width="30" height="32" viewBox="0 0 30 32"><path d="M15 1l14 5v20l-14 6-14-6V6z" fill="#b71a1a"/><path d="M15 7v25L1 26V6z" fill="#7d1010"/><text x="9" y="20" text-anchor="middle" font-size="13" font-weight="700" fill="#fff" font-family="Liberation Sans">S</text><text x="21" y="18" text-anchor="middle" font-size="12" font-weight="700" fill="#fff" font-family="Liberation Sans">W</text><text x="17" y="30" text-anchor="middle" font-size="7" font-weight="700" fill="#fff" font-family="Liberation Sans">2021</text></svg>
        </div>
        <div class="nx-bi d-flex align-items-center justify-content-center">
            <svg width="30" height="30" viewBox="0 0 30 30"><circle cx="15" cy="15" r="15" fill="#7ec63a"/><circle cx="15" cy="15" r="10" fill="none" stroke="#1c2e12" stroke-width="1.500"/><path d="M12 9l8 6-8 6z" fill="#111"/></svg>
        </div>
        <div class="nx-tray ms-auto d-flex align-items-center">
            <svg width="16" height="10" viewBox="0 0 16 10" fill="none" stroke="#fff" stroke-width="1.200"><path d="M1 9l7-8 7 8"/></svg>
            <svg class="nx-tgap" width="20" height="20" viewBox="0 0 20 20"><rect width="20" height="20" rx="4" fill="#fff"/><g fill="none" stroke-width="2.200"><circle cx="10" cy="7" r="3" stroke="#e0506a"/><circle cx="6" cy="12" r="3" stroke="#3a8fe0"/><circle cx="14" cy="12" r="3" stroke="#3a8fe0"/></g></svg>
            <svg class="nx-tgap" width="16" height="22" viewBox="0 0 16 22" fill="none" stroke="#fff"><path d="M2 1h7v6H2zM1 7h9v14H1zM4 3h1M7 3h1M9 21l3-1 3-3"/></svg>
            <svg class="nx-tgap" width="18" height="20" viewBox="0 0 18 20" fill="none" stroke="#8a97a8"><path d="M1 19C1 10 8 2 17 1M5 19c0-6 5-11 11-12M9 19c0-3 3-7 7-7"/><circle cx="14" cy="17" r="2" fill="#fff" stroke="none"/></svg>
            <svg class="ms-2" width="22" height="18" viewBox="0 0 22 18" fill="none" stroke="#fff"><path d="M1 6h4l5-4v14l-5-4H1zM13 6c2 2 2 4 0 6"/><path d="M16 3c4 3 4 9 0 12M19 1c5 4 5 12 0 16" stroke="#8a97a8"/></svg>
            <span class="ms-2" style="font-size:20px;line-height:1">中</span>
            <div class="nx-clock ms-2">21:01<br>2021/4/14</div>
            <div class="position-relative ms-2" style="width:44px;height:50px">
                <svg class="position-absolute" style="left:10px;top:14px" width="36" height="32" viewBox="0 0 36 32"><path d="M1 1h20v17h-5v4l-4-4H1z" fill="#fff"/><path d="M4 5h14M4 9h14M4 13h14" stroke="#334" stroke-width="1"/><circle cx="20" cy="20" r="10" fill="#3a3a3a" stroke="#888"/><text x="20" y="25" text-anchor="middle" font-size="13" font-weight="700" fill="#fff" font-family="Liberation Sans">1</text></svg>
            </div>
        </div>
    </footer>

    <!-- info dialog, floats above the main window -->
    <div class="nx-win">
        <div class="nx-wbar d-flex align-items-center">
            <svg width="16" height="16" viewBox="0 0 16 16" fill="none" stroke="#fff" stroke-width="2"><circle cx="8" cy="8" r="4.500"/><circle cx="8" cy="8" r="1" fill="#fff"/><path d="M8 0v3M8 13v3M0 8h3M13 8h3M2.500 2.500l2 2M11.500 11.500l2 2M13.500 2.500l-2 2M4.500 11.500l-2 2" stroke-width="1.600"/></svg>
            <span class="ms-2" style="font-size:15px">信息</span>
            <div class="ms-auto d-flex align-items-center" style="margin-right:4px">
                <div class="nx-wctl">?</div>
                <div class="nx-wctl">_</div>
                <div class="nx-wctl"><svg width="11" height="11" viewBox="0 0 11 11" fill="none" stroke="#fff" stroke-width="1.500"><path d="M1 1h9v9H1z"/></svg></div>
                <div class="nx-wctl"><svg width="13" height="13" viewBox="0 0 13 13" stroke="#fff" stroke-width="1.800"><path d="M1 1l11 11M12 1L1 12"/></svg></div>
            </div>
        </div>
        <div class="nx-wtools d-flex">
            <div class="nx-wbtn"><svg width="30" height="30" viewBox="0 0 30 30" fill="none" stroke="#444" stroke-width="1.100"><path d="M5 4h15l5 5v9M5 4v22h12M9 4v6h9V4M9 15h9M9 19h6M19 26l7-10 2 2-7 10-3 1z"/></svg></div>
            <div class="nx-wbtn"><svg width="30" height="30" viewBox="0 0 30 30" fill="none" stroke="#444" stroke-width="1.100"><path d="M8 12V3h14v9M4 22V12h22v10h-4M8 17h14v10H8z"/></svg></div>
            <div class="nx-wbtn"><svg width="30" height="30" viewBox="0 0 30 30" fill="none" stroke="#444" stroke-width="1.100"><circle cx="7" cy="11" r="3.500"/><circle cx="11" cy="23" r="3.500"/><path d="M10 12l17 5M13 20l11-16"/></svg></div>
            <div class="nx-wbtn"><svg width="30" height="30" viewBox="0 0 30 30" fill="none" stroke="#444" stroke-width="1.100"><path d="M4 3h11l4 4v3M4 3v20h6M10 9h10l6 6v12H10zM20 9v6h6"/></svg></div>
            <div class="nx-wbtn"><svg width="30" height="30" viewBox="0 0 30 30" fill="none" stroke="#444" stroke-width="1.100"><path d="M4 6h14v6M4 6v21h7M8 6V3h6v3M11 12h9l6 6v9H11zM20 12v6h6"/></svg></div>
            <div class="nx-wbtn"><svg width="30" height="30" viewBox="0 0 30 30" fill="none" stroke="#444" stroke-width="1.100"><path d="M5 5l20 20M25 5L5 25"/></svg></div>
            <div class="nx-wbtn"><svg width="30" height="30" viewBox="0 0 30 30" fill="none" stroke="#444" stroke-width="1.100"><circle cx="15" cy="15" r="6"/><path d="M15 5v20M6 15h18"/><path d="M9 5H4v20h5M21 5h5v20h-5" stroke="#d8872a" stroke-width="1.300"/></svg></div>
            <div class="nx-wbtn"><svg width="30" height="30" viewBox="0 0 30 30" fill="none" stroke="#444" stroke-width="1.100"><path d="M5 26V16l3-4V4h5v8l1 4v10zM25 26V16l-3-4V4h-5v8l-1 4v10zM5 20h9M16 20h9M14 11h2"/></svg></div>
            <div class="nx-wbtn nx-wbtn-on"><svg width="30" height="30" viewBox="0 0 30 30" fill="#fff" stroke="#111" stroke-width="1.300"><path d="M4 3h22v24H4z"/><path d="M8 8h14M8 13h14M8 18h12c3 0 3 5 0 5h-6M17 20l-3 3 3 3" fill="none"/></svg></div>
            <div class="nx-wbtn"><svg width="30" height="30" viewBox="0 0 30 30" fill="none" stroke="#555"><path d="M8 15h14"/></svg></div>
        </div>
        <div class="nx-wbody">
            <table class="table nx-info">
                <tbody>
                    <tr><td>信息列表创建者</td><td>Administrator</td></tr>
                    <tr><td>日期</td><td>14-Apr-2021 21:01:48</td></tr>
                    <tr><td>当前工作部件</td><td>C:\Users\Administrator\Desktop\图纸\壳体3.prt</td></tr>
                    <tr><td>节点名</td><td>desktop-01k828g</td></tr>
                </tbody>
            </table>
            <div class="nx-log">Open [D:\Kasa\udo\post\01.PTP] Failed<br>Please Check your folder..</div>
        </div>
        <div class="nx-msg">
            <div class="nx-mbar">消息</div>
            <div class="nx-mbody d-flex align-items-center">
                <svg width="40" height="40" viewBox="0 0 40 40"><circle cx="20" cy="20" r="19" fill="#ccc" stroke="#999"/><circle cx="20" cy="20" r="16.500" fill="url(#gInfo)"/><path d="M6 15c6-10 22-10 28 0-8-4-20-4-28 0z" fill="#fff" opacity=".25"/><circle cx="20" cy="11" r="2.800" fill="#e6ecf8"/><rect x="17.500" y="16" width="5" height="16" rx="2" fill="#dbe0ea"/></svg>
                <span style="margin-left:21px;font-family:'Noto Sans',sans-serif;font-size:15px">FETCH error</span>
            </div>
            <button type="button" class="nx-mbtn"><span>确定(<u>O</u>)</span></button>
        </div>
    </div>

    <script>
        // ribbon icons, row by row
        const rowA = [
            '<path d="M4 8l9-5 9 5v16l-9 5-9-5z" fill="url(#gGrey)" stroke="#ccc"/><path d="M13 16l14 6-4 2" fill="none" stroke="#aaa" stroke-width="3"/>',
            '<path d="M16 2l14 9v11l-14 8-14-8V11zM2 11l14 9 14-9M16 20v10M12 6v8l4 3 4-3V6" fill="#eee" stroke="#bbb"/><path d="M12 6l4-3 4 3v8l-4 3-4-3z" fill="#d6d6d6"/>',
            '<path d="M16 2l14 9v11l-14 8-14-8V11zM2 11l14 9 14-9M16 20v10M9 7l14 8" fill="#fafafa" stroke="#bbb"/><path d="M16 20l14-9v11l-14 8z" fill="#d8d8d8"/>',
            '<path d="M14 2l15 9-13 9-6 8-9-9z" fill="#cfcfcf"/><path d="M16 16h14v14H16z" fill="#fff" stroke="#777"/><path d="M18 28L27 20M16 18q12 0 13 12" fill="none" stroke="#666"/>',
            '<path d="M3 14l10-9h8v10l-8 6-10-2z" fill="#ddd" stroke="#aaa"/><rect x="14" y="2" width="16" height="10" fill="#fff" stroke="#999"/><text x="16" y="10.500" font-size="8" fill="#888">P=</text><path d="M16 16l12 13M28 16L16 29" stroke="#aaa" stroke-width="3.500"/><path d="M16 16l12 13M28 16L16 29" stroke="#fff" stroke-width="1.500"/>',
            '<circle cx="16" cy="16" r="12" fill="none" stroke="#bbb"/><circle cx="16" cy="16" r="1" fill="#777"/><path d="M2 4h28M2 28h28M4 2v28M28 2v28" stroke="#ccc" stroke-dasharray="2 2"/>',
            '<path d="M16 3l13 6v15l-13 6-13-6V9z" fill="#f8f8f8" stroke="#ddd"/><path d="M3 9l13-6 13 6-13 5z" fill="#e5e5e5"/><path d="M8 24l8-9 8 9" fill="none" stroke="#ddd"/>',
            '<rect x="3" y="2" width="11" height="28" fill="url(#gMetal)"/><path d="M18 10l11 20" stroke="#999" stroke-width="3"/><path d="M14 3l4 7 5-3" fill="none" stroke="#ddd"/>',
            '<path d="M5 8c0-7 22-7 22 0v16c0 7-22 7-22 0z" fill="#d4d4d4"/><ellipse cx="16" cy="9" rx="7" ry="4" fill="#888"/>',
            '<path d="M3 16l8-6v-3l9-5 10 5v7l-8 3v12H5z" fill="#d2d2d2" stroke="#aaa"/><path d="M11 17l11-5v18M3 16l8 1v13" fill="none" stroke="#eee" stroke-width="2"/>',
            '<path d="M2 2l16 16-16 12zM2 2c8 2 14 6 16 12" fill="none" stroke="#ccc"/><path d="M22 11h8v19H3v-7h19z" fill="#fff" stroke="#999"/><path d="M6 23v3M10 23v3M14 23v3M18 23v3M26 14h-3M26 18h-3" stroke="#999"/>',
            '<rect x="3" y="1" width="28" height="17" fill="#eee" stroke="#ccc"/><text x="5" y="15" font-size="14" font-weight="700" fill="#bbb">KG</text><path d="M5 24l5-4h8v6l-5 4H5z" fill="#eee" stroke="#bbb"/>',
            '<path d="M2 15L11 3l5 2-3 10 7 6-6 5-10-2z" fill="url(#gGrey)" stroke="#444" stroke-width="1.200"/><circle cx="21" cy="21" r="8" fill="#fff"/><path d="M28 17a8 8 0 1 0 1 6M24 11l4 6-6 1" fill="none" stroke="#111" stroke-width="1.600"/>',
            '<path d="M2 18l5-4h9v12l-5 4H2z" fill="#18d424" stroke="#0b2bb0" stroke-width="1.500"/><path d="M18 7l5-5h8v12l-5 4h-8z" fill="#18d424" stroke="#0b2bb0" stroke-width="1.500"/><path d="M13 13l6 6M19 13l-6 6" stroke="#f2e030" stroke-width="2"/>',
            '<text x="3" y="12" font-size="10" font-weight="700" fill="#2030a8" font-family="Liberation Mono">PRT</text><path d="M8 30l9-6v-7l3 3 4-3 6 8-8 2-1-3z" fill="#1d45e8"/>',
            '<path d="M6 4v26M6 17h20M6 29h20" stroke="#111" stroke-width="2" fill="none"/><path d="M2 1h11v5H2zM21 9h10v5H21zM21 24h10v5H21z" fill="#f3df2a" stroke="#111"/><path d="M14 15h12v4H14z" fill="#b8a020" stroke="#111"/>',
            '<path d="M16 2l14 8-14 8-14-8z" fill="#e0e0e0" stroke="#333"/><path d="M2 15l14 8 14-8M2 20l14 8 14-8" fill="none" stroke="#333"/>',
            '<path d="M5 7l7-4v26l-7-2zM12 7l4-4 11 3 1 20-11 3-5-3" fill="#fff" stroke="#222"/><path d="M12 3l6 3v24M8 5l6 3" fill="none" stroke="#222"/>',
            '<g stroke="#222"><path d="M20 2l9 4v8l-9 4-6-3V7z" fill="#ccc"/><path d="M5 12l7-3 7 3v8l-7 3-7-3z" fill="#ddd"/><path d="M5 22l7-3 6 3v6l-6 3-7-3z" fill="#aaa"/></g>',
            '<rect x="2" y="20" width="11" height="11" fill="#ddd"/><rect x="9" y="10" width="11" height="11" fill="#fff" stroke="#ccc"/><rect x="18" y="1" width="11" height="11" fill="#fff" stroke="#ccc"/>',
            '<path d="M3 22l8-6h14l4 4v8H3z" fill="#ddd" stroke="#bbb"/><path d="M16 3v16M16 16l9-4M16 16l-8-4" stroke="#bbb"/><text x="4" y="9" font-size="7" fill="#aaa">Z</text><text x="18" y="8" font-size="7" fill="#aaa">Y</text>',
            '<path d="M3 24C2 8 14 1 24 3c6 1 7 12 6 21z" fill="#aebcc6"/><path d="M9 24c0-9 6-14 14-13v13z" fill="#4f9fc8"/>',
            '<path d="M4 8l8-6h10l6 6v14H4zM4 16h24M16 2v20" fill="#f3f3f3" stroke="#ccc"/>',
            '<rect x="12" y="2" width="8" height="28" fill="#ddd"/><path d="M16 4v26" stroke="#bbb"/>',
            '<rect x="12" y="2" width="8" height="28" fill="#ddd"/><path d="M16 4v26" stroke="#bbb"/>',
            '<rect x="2" y="12" width="28" height="18" fill="#d8d8d8" stroke="#bbb"/>',
            '<path d="M4 30L14 6h14M18 4h10M18 12h10M18 20h10" fill="none" stroke="#bbb" stroke-dasharray="3 2"/>',
            '<ellipse cx="16" cy="15" rx="13" ry="15" fill="#ddd" stroke="#333"/><path d="M3 15h26M16 0v30M8 3c-4 9-4 17 0 25M24 3c4 9 4 17 0 25" fill="none" stroke="#333"/>',
            '<path d="M4 3h18l7 7v16l-3 3H4z" fill="#fff" stroke="#2029c8" stroke-width="3"/><rect x="10" y="10" width="11" height="11" fill="#bcd0ff" stroke="#2029c8" stroke-width="2"/>',
            '<path d="M4 14l14-8 9 6v14H4z" fill="#eee" stroke="#ccc"/><path d="M18 2l8 8-6 4z" fill="#bbb"/>',
            '<path d="M8 4h16v26H8z" fill="#f1f1f1" stroke="#bbb"/><path d="M12 10h8M12 16h8" stroke="#ccc" stroke-width="2"/>',
            '<rect x="8" y="1" width="4" height="30" fill="#bbb"/><path d="M14 14h14v14H14z" fill="#fff" stroke="#ccc"/>',
            '<rect x="12" y="2" width="18" height="12" fill="#eee" stroke="#bbb"/><path d="M4 14h22v14H4z" fill="#ddd" stroke="#bbb"/>'
        ];
        const rowB = [
            '<path d="M3 4h26v5H3zM3 13h26v5H3zM3 22h26v5H3z" fill="#eee" stroke="#ccc"/><path d="M29 9v4M3 18v4" stroke="#ccc" stroke-width="3"/>',
            '<path d="M3 1h3v30H3zM8 1h3v30H8z" fill="#ddd" stroke="#aaa"/><path d="M13 12h5V7l7 9-7 9v-5h-5z" fill="#ddd"/><path d="M25 2c4 5-3 9 2 14s-3 10 1 15" fill="none" stroke="#bbb"/>',
            '<path d="M6 3h5l2 2h6l2-2h5l3 4-2 4 2 7-4 9-7 3-7-3-4-9 2-7-2-4z" fill="#bbb" stroke="#999"/><circle cx="11" cy="12" r="3" fill="#ddd" stroke="#666"/><circle cx="21" cy="12" r="3" fill="#ddd" stroke="#666"/><path d="M11 21l5 4 5-4" fill="none" stroke="#666"/><path d="M14 18h4l-2 3z" fill="#666"/>',
            '<path d="M4 6l12-4 3 2v12H4z" fill="#eee" stroke="#ddd"/><rect x="12" y="8" width="10" height="8" fill="#ddd"/><path d="M3 17h26M3 17v13M16 24h14v6H16zM16 17h14v6H16z" fill="#ddd" stroke="#ccc"/>',
            '<rect x="2" y="1" width="13" height="27" fill="url(#gGrey)"/><path d="M15 10h16M15 15h12M15 20l12-5M20 31l4-11 6-5" fill="none" stroke="#888" stroke-width="2"/><circle cx="16" cy="29" r="3" fill="#fff" stroke="#888"/>',
            '<rect x="2" y="8" width="6" height="16" fill="#aaa"/><rect x="11" y="3" width="18" height="8" fill="#fff" stroke="#999"/><path d="M18 11v18M18 16h4M18 22h4M18 28h4" stroke="#999" fill="none"/><rect x="21" y="14" width="4" height="4" fill="#fff" stroke="#999"/><rect x="21" y="20" width="4" height="4" fill="#fff" stroke="#999"/><rect x="21" y="26" width="4" height="4" fill="#fff" stroke="#999"/>',
            '<rect x="3" y="1" width="4" height="18" fill="#999"/><rect x="12" y="11" width="5" height="18" fill="#aaa"/><path d="M20 14h4M20 20h4M20 26h4M24 14h7M24 20h7M24 26h7M2 24c0 6 8 6 8 1" fill="none" stroke="#aaa" stroke-width="1.500"/>',
            '<path d="M6 30V8M3 11l3-4 3 4M6 30l5-8 4-2M18 2v20M15 6l3-4 3 4M26 2v26M23 24l3 4 3-4" fill="none" stroke="#999"/>',
            '<path d="M6 2h4M6 8h4M6 14h4M12 4h8M12 10h8" stroke="#999" fill="none"/><rect x="3" y="1" width="4" height="4" fill="none" stroke="#999"/><rect x="3" y="7" width="4" height="4" fill="none" stroke="#999"/><rect x="3" y="13" width="4" height="4" fill="none" stroke="#999"/><rect x="17" y="10" width="14" height="20" fill="#fff" stroke="#aaa"/><path d="M20 14v12M20 14h8M20 20h8M20 26h8M4 20c0 7 5 7 10 6" fill="none" stroke="#aaa"/>',
            '<path d="M14 1H3v8h11M3 9v8h11M3 17v12h11" fill="none" stroke="#bbb"/><path d="M17 20a7 7 0 0 1 13-2M30 24a7 7 0 0 1-13 2M27 18h4v-4M20 26h-4v4" fill="none" stroke="#aaa"/>',
            '<path d="M2 1h30v7H18c-4 0-7 4-8 9v14H2z" fill="#f9f21f" stroke="#111" stroke-width="1.500"/><path d="M8 31V18c0-7 6-12 12-12h12" fill="none" stroke="#111" stroke-width="1.500"/><path d="M19 16l2 3M23 21l2 3M27 27l2 3" stroke="#d9342a" stroke-width="2.500"/>',
            '<path d="M1 11l11-8 10 6v9l-9 7-12-5z" fill="url(#gGrey)" stroke="#ccc"/><path d="M16 14l12 2v15l-12-3z" fill="#fff" stroke="#999"/><path d="M21 13l9 2v13" fill="none" stroke="#aaa"/>',
            '<path d="M1 10l12-8 13 8-13 7z" fill="#f08a1f"/><path d="M1 10v13l12 6V17z" fill="#ddd"/><path d="M13 17l13-7v8l-13 8z" fill="#aaa"/><path d="M13 24h11v-3l7 5-7 4v-3H13zM19 22h-8v-3l-7 5 7 4v-3" fill="#fff" stroke="#111" stroke-width="1.300"/>',
            '<path d="M2 8l12-6 0 26-12-4z" fill="#f6f6f6" stroke="#ddd"/><path d="M14 4c2-3 15-3 15 2v20c0 3-13 4-15 2z" fill="#d8d8d8" stroke="#ccc"/>',
            '<text x="16" y="30" font-size="38" text-anchor="middle" font-family="Liberation Serif" fill="#cfcfcf">A</text>',
            '<text x="2" y="10" font-size="9" font-weight="700" fill="#bbb" font-family="Liberation Mono">DXF</text><path d="M8 30l8-6v-6l3 3 4-3 6 8-8 2-1-3z" fill="#aaa"/>',
            '<text x="1" y="12" font-size="10" font-weight="700" fill="#bbb" font-family="Liberation Mono" textLength="30">INCH</text><path d="M3 15h24M3 19h24" stroke="#bbb" stroke-width="2.500"/><text x="7" y="31" font-size="10" font-weight="700" fill="#bbb" font-family="Liberation Mono">MM</text>',
            '<path d="M16 3l13 7-13 7-13-7z" fill="#ddd"/><path d="M3 15l13 7 13-7-5-2-8 4-8-4zM3 21l13 7 13-7-5-2-8 4-8-4z" fill="#ddd"/>',
            '<circle cx="14" cy="14" r="13" fill="#ccc"/><path d="M14 14V1a13 13 0 0 1 13 13z" fill="#ddd"/><path d="M30 17l-3 4 1 2-7 7-3-1 7-8" fill="#fff" stroke="#999" stroke-width="1.500"/>',
            '<rect x="1" y="1" width="30" height="30" fill="#fff" stroke="#ddd"/><circle cx="10" cy="14" r="6" fill="none" stroke="#ccc"/><circle cx="10" cy="14" r="3" fill="none" stroke="#ccc"/><circle cx="23" cy="8" r="5" fill="none" stroke="#ccc"/><circle cx="22" cy="23" r="6" fill="none" stroke="#ccc"/>',
            '<path d="M10 5c0-5 14-5 14 0v14H10z" fill="#c8c8c8"/><path d="M2 18l8-3 14 4 6 4v7H10z" fill="#ddd" stroke="#bbb"/>'
        ];

        function fillRibbon(id, icons) {
            document.getElementById(id).innerHTML = icons.map(body =>
                `<div class="nx-rcell d-flex align-items-center justify-content-center"><svg viewBox="0 0 32 32">${body}</svg></div>`
            ).join('');
        }
        fillRibbon('ribbonA', rowA);
        fillRibbon('ribbonB', rowB);

        // operation list, only the first rows carry values
        const times = ['00:13:20', '00:00:00', '00:13:20', '00:13:08'];
        for (let i = 0; i < 14; i++) times.push('00:00:00');
        let rows = '';
        for (let i = 0; i < 42; i++) {
            const op = i === 3;
            const vals = op ? ['10', times[i], '0.1000', '0.1000', '1 mm', '5000 ...', '7000 r...'] : ['', times[i] || '', '', '', '', '', ''];
            rows += `<tr class="${i === 2 ? 'nx-sel' : ''} ${op ? 'nx-op' : ''}"><td></td><td></td><td></td>`;
            vals.forEach((v, k) => {
                rows += `<td class="${k === 6 ? 'nx-last' : ''}">${v}</td>`;
            });
            rows += '<td class="nx-end"></td></tr>';
        }
        document.getElementById('opRows').innerHTML = rows;
    </script>
    <script src="https://cdn.jsdelivr.net/npm/bootstrap@5.3.3/dist/js/bootstrap.bundle.min.js"></script>
</body>

</html>
